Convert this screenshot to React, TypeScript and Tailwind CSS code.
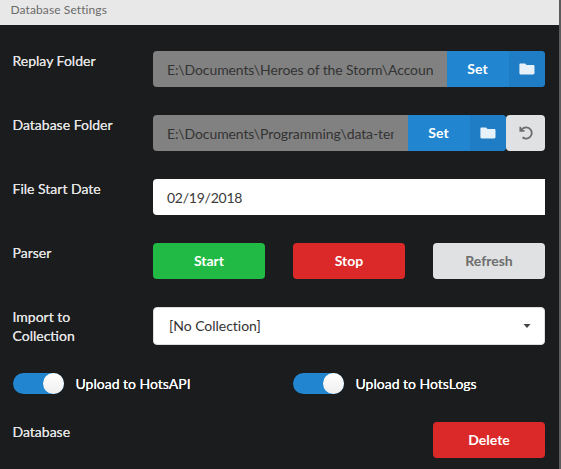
import React from "react";

function FolderIcon() {
  return (
    <svg viewBox="0 0 16 12" className="h-3 w-4 fill-[#e7f1fa]">
      <path d="M1.6.5H6l1.600 1.500h6.600c.8 0 1.3.5 1.3 1.3v6.800c0 .8-.5 1.3-1.3 1.3H1.6C.8 11.4.4 10.900.4 10.100V1.800C.4 1 .8.5 1.600.5z" />
    </svg>
  );
}

function UndoIcon() {
  return (
    <svg viewBox="0 0 14 14" className="h-[14px] w-[14px] fill-none stroke-[#6c6d6e]">
      <path d="M1.300 .8V4.900H5.500" strokeWidth="1.700" />
      <path d="M1.800 4.600C3 2.500 4.900 1.400 7.200 1.400a5.600 5.600 0 1 1-3.700 9.900" strokeWidth="1.800" />
    </svg>
  );
}

function Row({ label, children }: { label: string; children: React.ReactNode }) {
  return (
    <div className="flex h-16 items-start">
      <div className="-ml-[0.5px] mr-[0.5px] w-[140px] shrink-0 pr-7 text-[#e3e3e3] [text-shadow:0_0_.4px_#e3e3e3]">
        {label}
      </div>
      <div className="flex w-[392px]">{children}</div>
    </div>
  );
}

function PathField({ value }: { value: string }) {
  return (
    <div className="h-9 min-w-0 flex-1 rounded-l bg-[#818181] px-[14px] pt-px leading-9 text-[#333]">
      <div className="overflow-hidden whitespace-nowrap tracking-[-0.105px]">{value}</div>
    </div>
  );
}

function SetButton() {
  return (
    <button className="flex h-9 w-[98px] shrink-0 overflow-hidden rounded-r bg-[#2185d0] font-bold text-white">
      <span className="w-[61px] text-center leading-[35px]">Set</span>
      <span className="ml-px flex h-9 w-9 items-center justify-center bg-[#1e7dc5]">
        <FolderIcon />
      </span>
    </button>
  );
}

function Toggle({ label }: { label: string }) {
  return (
    <div className="flex w-[280px] shrink-0 items-center">
      <div className="flex h-[21px] w-[51px] justify-end rounded-full bg-[#2185d0]">
        <div className="h-[21px] w-[21px] rounded-full bg-linear-to-b from-white to-[#efefef]" />
      </div>
      <span className="pl-[11.5px] text-white [text-shadow:0_0_.4px_#fff]">{label}</span>
    </div>
  );
}

export default function App() {
  return (
    <div className="h-[469px] w-[561px] overflow-hidden border-r-2 border-[#5b5b5b] bg-[#1b1c1d] font-['Lato',sans-serif] text-[14px] leading-[19px]">
      <header className="h-[25px] bg-[#e8e8e8] pl-[10.5px] text-[12px] leading-[19px] tracking-[0.1px] text-[#6a6a6a]">Database Settings</header>
      <main className="pl-[13px] pt-[26px]">
        <Row label="Replay Folder">
          <PathField value="E:\Documents\Heroes of the Storm\Accoun" />
          <SetButton />
        </Row>
        <Row label="Database Folder">
          <PathField value="E:\Documents\Programming\data-tem" />
          <SetButton />
          <button className="flex h-9 w-[39px] items-center justify-center rounded bg-[#e0e1e2]">
            <UndoIcon />
          </button>
        </Row>
        <Row label="File Start Date">
          <div className="h-9 flex-1 rounded-l bg-white pl-[14px] pt-px leading-9 tracking-[-0.25px] text-[#3a3a3a]">
            02/19/2018
          </div>
        </Row>
        <Row label="Parser">
          <div className="flex gap-7 font-bold text-white">
            <button className="h-9 w-28 rounded bg-[#21ba45] pb-[2px]">Start</button>
            <button className="h-9 w-28 rounded bg-[#db2828] pb-[2px]">Stop</button>
            <button className="h-9 w-28 rounded bg-[#e0e1e2] pb-[2px] text-[#6c6d6e]">Refresh</button>
          </div>
        </Row>
        <Row label="Import to Collection">
          <div className="flex h-[38px] flex-1 items-center justify-between rounded border border-[#dededf] bg-white pl-[15px] pr-[13px] text-[#333]">
            <span className="pb-[2px] tracking-[-0.03px]">[No Collection]</span>
            <svg viewBox="0 0 8 4" className="h-1 w-2 fill-[#444]">
              <path d="M.5 0h7L4 4z" />
            </svg>
          </div>
        </Row>
        <div className="flex h-[51px] items-start pt-[2px]">
          <Toggle label="Upload to HotsAPI" />
          <Toggle label="Upload to HotsLogs" />
        </div>
        <Row label="Database">
          <button className="ml-auto h-9 w-28 rounded bg-[#db2828] pb-[2px] font-bold text-white">Delete</button>
        </Row>
      </main>
    </div>
  );
}
